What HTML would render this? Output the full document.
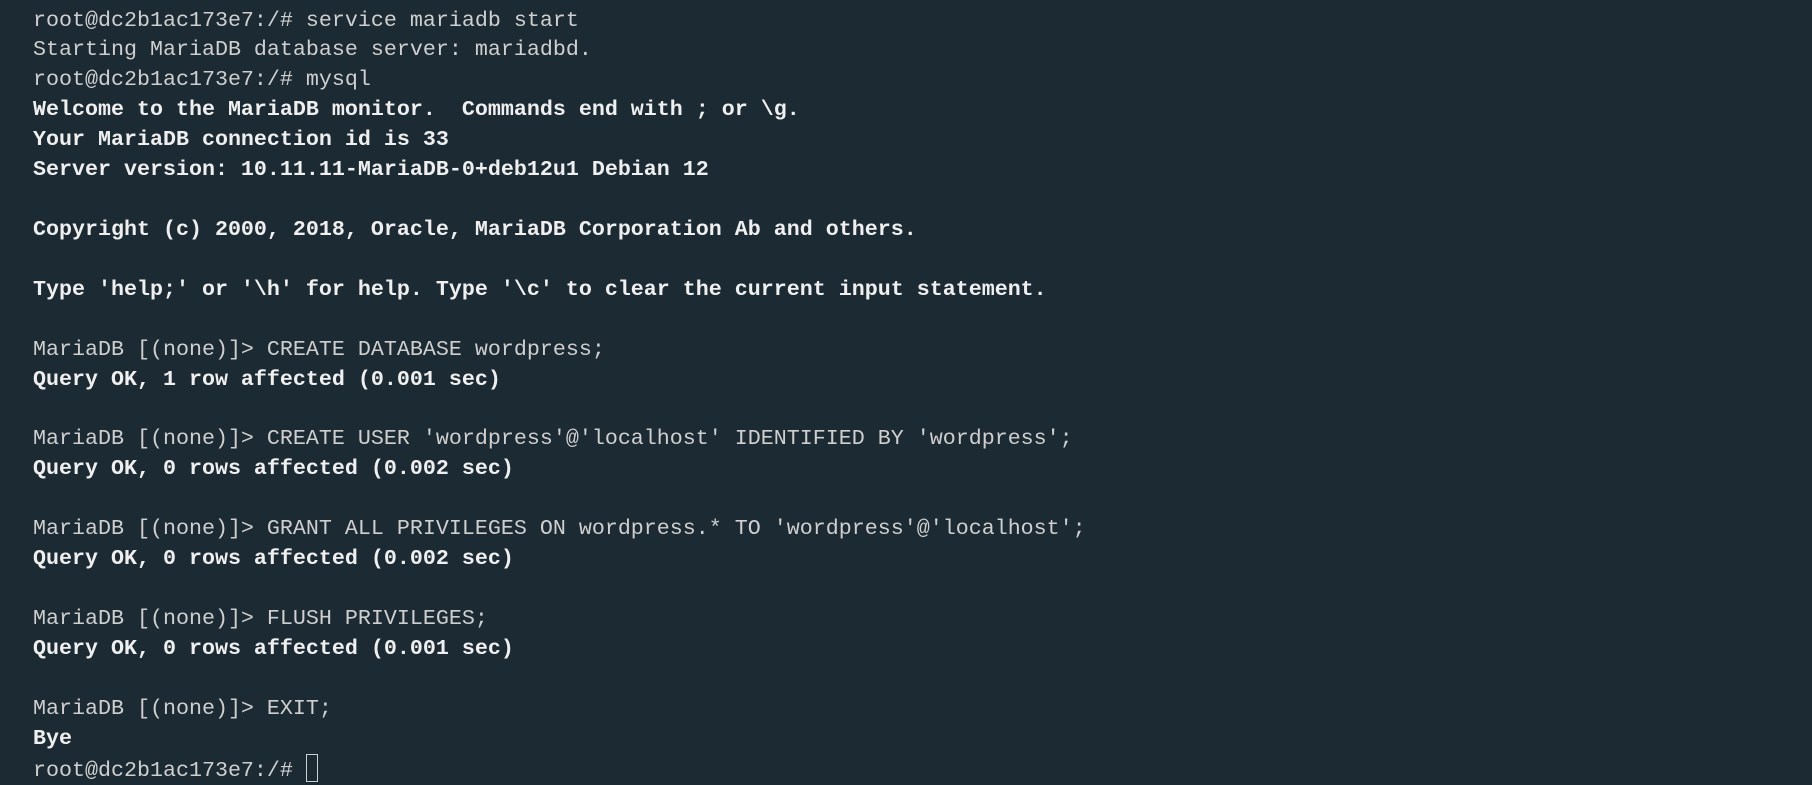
<!DOCTYPE html>
<html><head><meta charset="utf-8"><style>
html,body{margin:0;padding:0;width:1812px;height:781px;overflow:hidden;background:#1b2a33;}
pre{margin:0;position:absolute;left:33px;top:5.5px;font-family:"Liberation Mono",monospace;font-size:21.67px;line-height:29.92px;color:#cfcfcf;white-space:pre;}
b{color:#efefef;font-weight:bold;}
.cur{display:inline-block;width:10px;height:26px;border:1.5px solid #d0d0d0;vertical-align:-6px;}
</style></head><body>
<pre>root@dc2b1ac173e7:/# service mariadb start
Starting MariaDB database server: mariadbd.
root@dc2b1ac173e7:/# mysql
<b>Welcome to the MariaDB monitor.  Commands end with ; or \g.</b>
<b>Your MariaDB connection id is 33</b>
<b>Server version: 10.11.11-MariaDB-0+deb12u1 Debian 12</b>

<b>Copyright (c) 2000, 2018, Oracle, MariaDB Corporation Ab and others.</b>

<b>Type 'help;' or '\h' for help. Type '\c' to clear the current input statement.</b>

MariaDB [(none)]&gt; CREATE DATABASE wordpress;
<b>Query OK, 1 row affected (0.001 sec)</b>

MariaDB [(none)]&gt; CREATE USER 'wordpress'@'localhost' IDENTIFIED BY 'wordpress';
<b>Query OK, 0 rows affected (0.002 sec)</b>

MariaDB [(none)]&gt; GRANT ALL PRIVILEGES ON wordpress.* TO 'wordpress'@'localhost';
<b>Query OK, 0 rows affected (0.002 sec)</b>

MariaDB [(none)]&gt; FLUSH PRIVILEGES;
<b>Query OK, 0 rows affected (0.001 sec)</b>

MariaDB [(none)]&gt; EXIT;
<b>Bye</b>
root@dc2b1ac173e7:/# <span class="cur"></span></pre>
</body></html>
